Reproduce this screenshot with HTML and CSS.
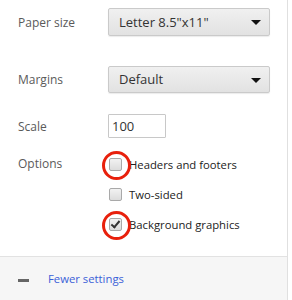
FILE: index.html
```html
<!DOCTYPE html>
<html lang="en">
<head>
    <meta charset="UTF-8">
    <title>Print settings</title>
    <link rel="stylesheet" href="styles.css">
</head>
<body>
    <div class="panel">
        <div class="settings">
            <div class="row paper">
                <span class="label">Paper size</span>
                <div class="select">Letter 8.5"x11"<span class="arrow"></span></div>
            </div>
            <div class="row margins">
                <span class="label">Margins</span>
                <div class="select">Default<span class="arrow"></span></div>
            </div>
            <div class="row scale">
                <span class="label">Scale</span>
                <div class="input">100</div>
            </div>
            <div class="options">
                <span class="label">Options</span>
                <div class="checks">
                    <div class="check"><span class="box marked"></span>Headers and footers</div>
                    <div class="check"><span class="box"></span>Two-sided</div>
                    <div class="check"><span class="box checked marked"></span>Background graphics</div>
                </div>
            </div>
        </div>
        <div class="footer">
            <span class="minus"></span>
            <span class="link">Fewer settings</span>
        </div>
    </div>
</body>
</html>
```

FILE: styles.css
```css
body {
    margin: 0;
    font-family: "Open Sans", "Noto Sans", sans-serif;
    font-size: 12px;
    background: #fff;
}

.panel {
    width: 287px;
    height: 300px;
    border-right: 1px solid #e0e0e0;
    display: flex;
    flex-direction: column;
}

.settings {
    padding: 8px 0 0 18px;
    height: 240px;
}

.row {
    display: flex;
    align-items: center;
}

.label {
    width: 90px;
    color: #5a5a5a;
    font-size: 12px;
}

.paper {
    margin-bottom: 30px;
}

.margins {
    margin-bottom: 21px;
}

.select {
    position: relative;
    box-sizing: border-box;
    width: 162px;
    height: 28px;
    line-height: 26px;
    padding-left: 10px;
    border: 1px solid #cacaca;
    border-radius: 2px;
    background: linear-gradient(#f0f0f0, #e2e2e2);
    box-shadow: 0 1px 1px rgba(0, 0, 0, 0.08);
    color: #333;
    font-size: 13px;
}

.margins .select {
    height: 27px;
    line-height: 25px;
}

.arrow {
    position: absolute;
    right: 8px;
    top: 11px;
    border-left: 5px solid transparent;
    border-right: 5px solid transparent;
    border-top: 5px solid #111;
}

.input {
    box-sizing: border-box;
    width: 58px;
    height: 24px;
    line-height: 22px;
    padding-left: 3px;
    border: 1px solid #c8c8c8;
    border-radius: 1px;
    color: #333;
    font-size: 13px;
}

.options {
    display: flex;
    margin-top: 11px;
}

.options .label {
    line-height: 30px;
}

.check {
    display: flex;
    align-items: center;
    height: 30px;
    color: #222;
    font-size: 11.3px;
}

.box {
    position: relative;
    box-sizing: border-box;
    width: 13px;
    height: 13px;
    margin: 0 7px 0 1px;
    border: 1px solid #a9a9a9;
    border-radius: 2px;
    background: linear-gradient(#f2f2f2, #dcdcdc);
}

.box.checked::before {
    content: "";
    position: absolute;
    left: 3px;
    top: 0px;
    width: 3px;
    height: 7px;
    border-right: 2px solid #333;
    border-bottom: 2px solid #333;
    transform: rotate(40deg);
}

.box.marked::after {
    content: "";
    position: absolute;
    left: -8px;
    top: -8px;
    width: 23px;
    height: 23px;
    border: 3px solid #e8200c;
    border-radius: 50%;
}

.footer {
    flex: 1;
    display: flex;
    align-items: center;
    border-top: 1px solid #e2e2e2;
    background: #f6f6f6;
    padding-left: 18px;
    margin-top: 8px;
}

.minus {
    width: 11px;
    height: 3px;
    background: #666;
    margin: 3px 19px 0 0;
}

.link {
    color: #3b5fd8;
    font-size: 11.3px;
}
```
